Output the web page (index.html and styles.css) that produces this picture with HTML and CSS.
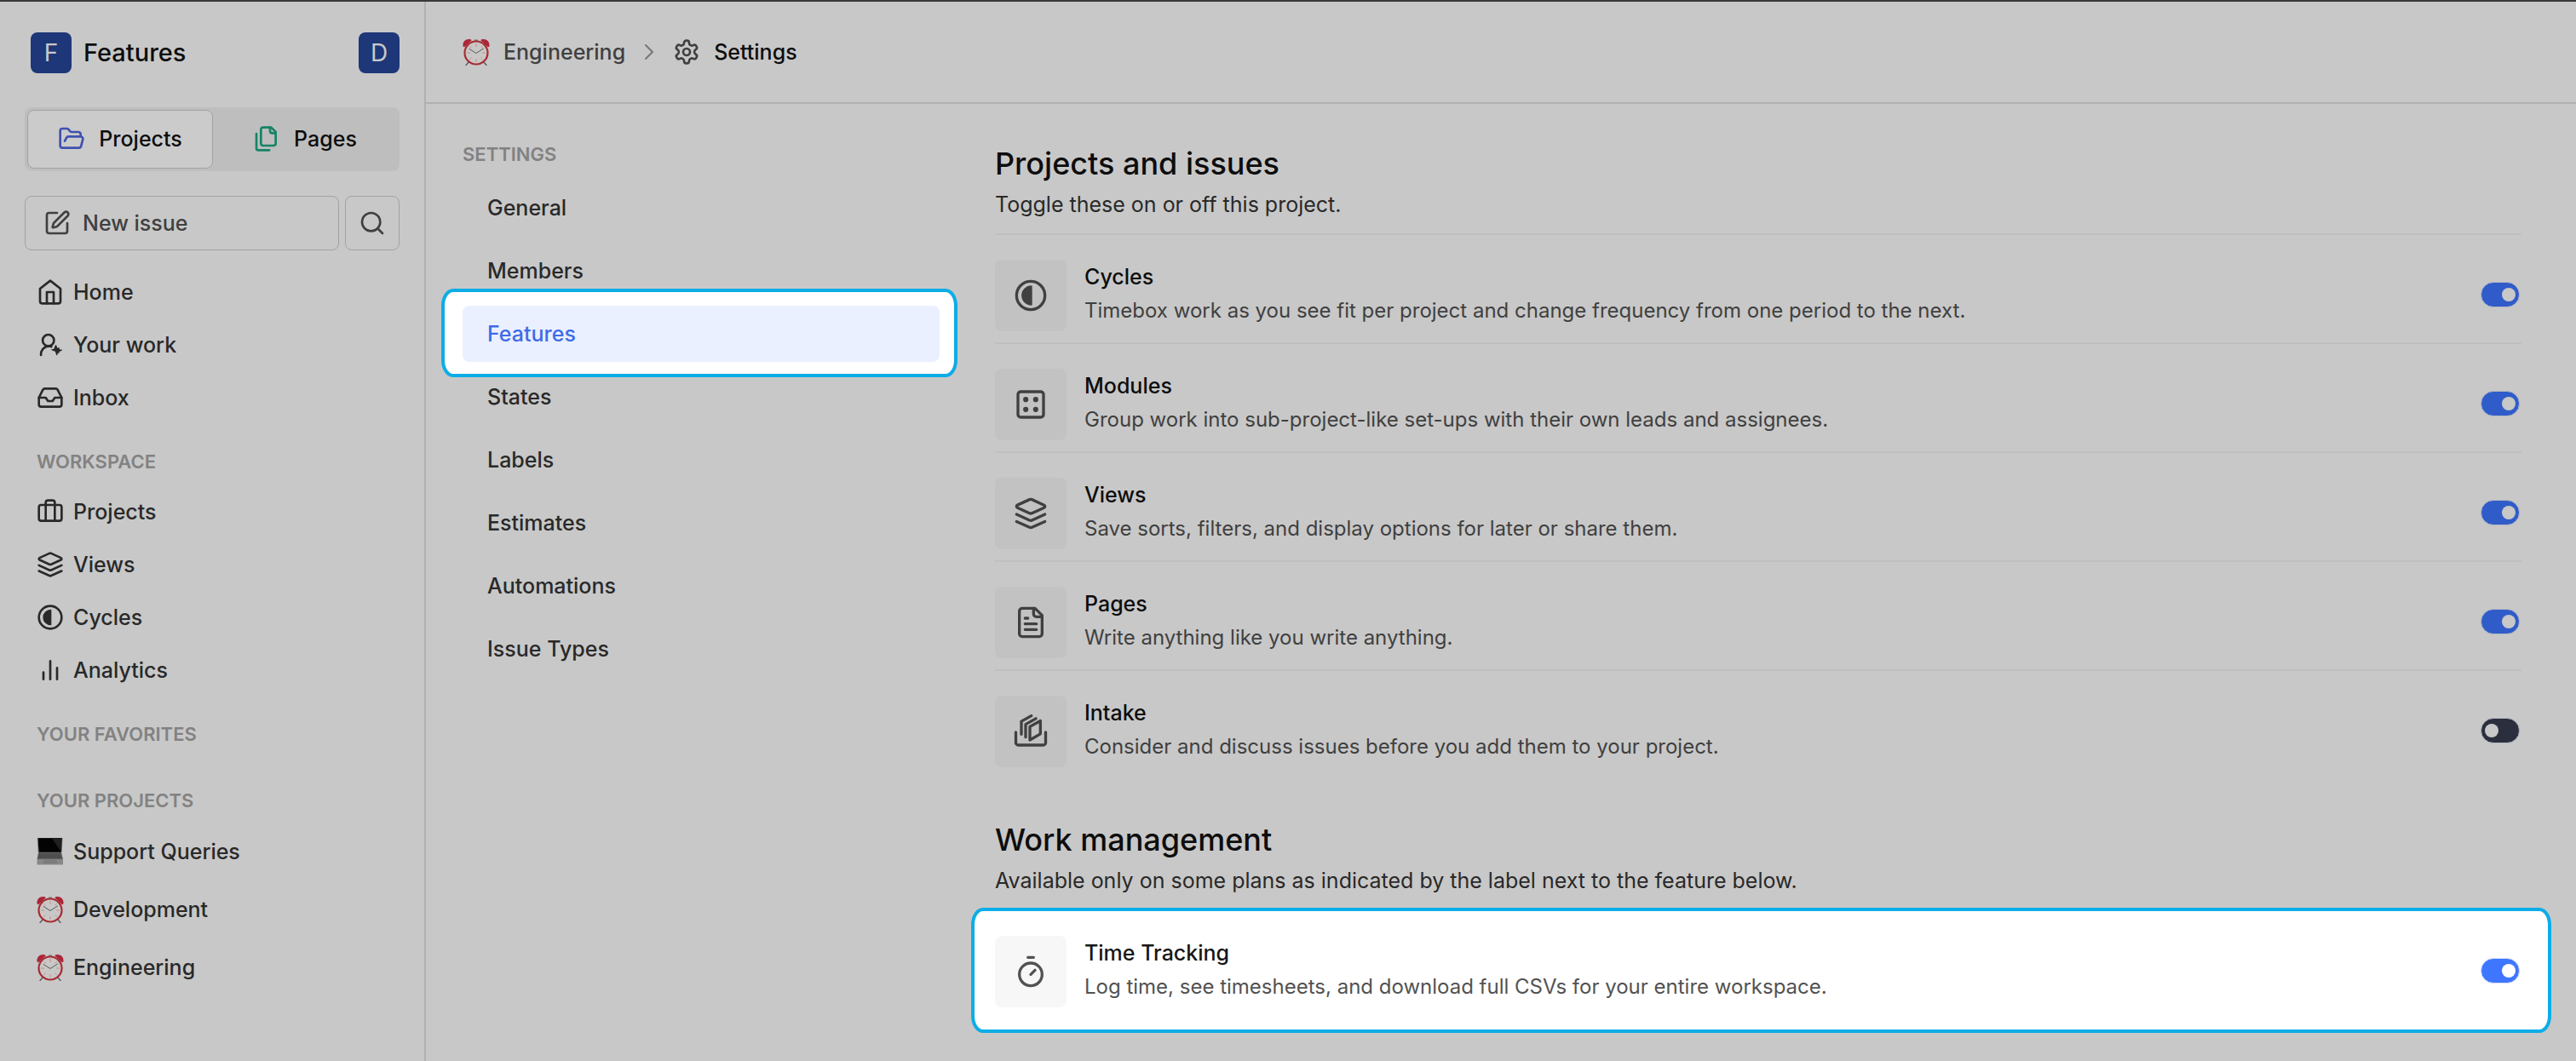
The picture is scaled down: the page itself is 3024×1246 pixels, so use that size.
FILE: index.html
```html
<!DOCTYPE html>
<html lang="en">
<head>
<meta charset="utf-8">
<meta name="viewport" content="width=device-width, initial-scale=1">
<title>Engineering - Settings</title>
<link rel="stylesheet" href="styles.css">
</head>
<body>
<svg class="sprite" aria-hidden="true">
  <symbol id="folder" viewBox="0 0 24 24"><path d="m6 14 1.5-2.9A2 2 0 0 1 9.24 10H20a2 2 0 0 1 1.94 2.5l-1.54 6a2 2 0 0 1-1.95 1.5H4a2 2 0 0 1-2-2V5a2 2 0 0 1 2-2h3.9a2 2 0 0 1 1.69.9l.81 1.2a2 2 0 0 0 1.67.9H18a2 2 0 0 1 2 2v2"/></symbol>
  <symbol id="files" viewBox="0 0 24 24"><path d="M20 7h-3a2 2 0 0 1-2-2V2"/><path d="M9 18a2 2 0 0 1-2-2V4a2 2 0 0 1 2-2h7l4 4v10a2 2 0 0 1-2 2Z"/><path d="M3 7.600v12.800A1.600 1.600 0 0 0 4.600 22h9.800"/></symbol>
  <symbol id="compose" viewBox="0 0 24 24"><path d="M12 3H5a2 2 0 0 0-2 2v14a2 2 0 0 0 2 2h14a2 2 0 0 0 2-2v-7"/><path d="M18.375 2.625a1 1 0 0 1 3 3l-9.013 9.014a2 2 0 0 1-.853.505l-2.873.84a.5.5 0 0 1-.62-.62l.84-2.873a2 2 0 0 1 .506-.852z"/></symbol>
  <symbol id="search" viewBox="0 0 24 24"><circle cx="11" cy="11" r="8"/><path d="m21 21-4.300-4.300"/></symbol>
  <symbol id="home" viewBox="0 0 24 24"><path d="m3 9 9-7 9 7v11a2 2 0 0 1-2 2H5a2 2 0 0 1-2-2z"/><path d="M9 22V12h6v10"/></symbol>
  <symbol id="user" viewBox="0 0 24 24"><circle cx="10.300" cy="8" r="5"/><path d="M3.800 21a7.500 7.500 0 0 1 6.500-8c1 0 1.800.1 2.700.5"/><path d="M13.500 16.300h1.900l1.500-3.800 1.300 3.200 1.300-.900.400 1.700 2.100.100-2.300 1-.3 1.200-1.100-.200-.500 2.100-1-3.200z" fill="currentColor" stroke-width="1"/></symbol>
  <symbol id="inbox" viewBox="0 0 24 24"><path d="M22 12h-6l-2 3h-4l-2-3H2"/><path d="M5.450 5.110 2 12v6a2 2 0 0 0 2 2h16a2 2 0 0 0 2-2v-6l-3.450-6.890A2 2 0 0 0 16.760 4H7.240a2 2 0 0 0-1.790 1.110z"/></symbol>
  <symbol id="briefcase" viewBox="0 0 24 24"><rect width="20" height="14" x="2" y="6" rx="2"/><path d="M16 20V4a2 2 0 0 0-2-2h-4a2 2 0 0 0-2 2v16"/></symbol>
  <symbol id="layers" viewBox="0 0 24 24"><path d="m12.830 2.180a2 2 0 0 0-1.660 0L2.600 6.080a1 1 0 0 0 0 1.830l8.580 3.910a2 2 0 0 0 1.660 0l8.580-3.900a1 1 0 0 0 0-1.830Z"/><path d="m22 17.650-9.170 4.160a2 2 0 0 1-1.660 0L2 17.650"/><path d="m22 12.650-9.170 4.160a2 2 0 0 1-1.660 0L2 12.650"/></symbol>
  <symbol id="contrast" viewBox="0 0 24 24"><circle cx="12" cy="12" r="10"/><path d="M12.500 5.500a6.500 6.500 0 0 0 0 13z" fill="currentColor" stroke-width="1"/></symbol>
  <symbol id="chart" viewBox="0 0 24 24"><path d="M18 20V10M12 20V4M6 20v-6"/></symbol>
  <symbol id="gear" viewBox="0 0 24 24"><path d="M12.220 2h-.44a2 2 0 0 0-2 2v.18a2 2 0 0 1-1 1.730l-.43.25a2 2 0 0 1-2 0l-.15-.08a2 2 0 0 0-2.730.73l-.22.38a2 2 0 0 0 .73 2.730l.15.1a2 2 0 0 1 1 1.720v.51a2 2 0 0 1-1 1.740l-.15.09a2 2 0 0 0-.73 2.730l.22.38a2 2 0 0 0 2.730.73l.15-.08a2 2 0 0 1 2 0l.43.25a2 2 0 0 1 1 1.730V20a2 2 0 0 0 2 2h.44a2 2 0 0 0 2-2v-.18a2 2 0 0 1 1-1.730l.43-.25a2 2 0 0 1 2 0l.15.08a2 2 0 0 0 2.730-.73l.22-.39a2 2 0 0 0-.73-2.730l-.15-.08a2 2 0 0 1-1-1.740v-.5a2 2 0 0 1 1-1.740l.15-.09a2 2 0 0 0 .73-2.730l-.22-.38a2 2 0 0 0-2.730-.73l-.15.08a2 2 0 0 1-2 0l-.43-.25a2 2 0 0 1-1-1.730V4a2 2 0 0 0-2-2z"/><circle cx="12" cy="12" r="3"/></symbol>
  <symbol id="chevron" viewBox="0 0 24 24"><path d="m8 4 8 8-8 8"/></symbol>
  <symbol id="dice" viewBox="0 0 24 24"><rect width="18" height="18" x="3" y="3" rx="2"/><g fill="currentColor" stroke-width="1.500"><circle cx="8.500" cy="8.500" r="1.100"/><circle cx="15.500" cy="8.500" r="1.100"/><circle cx="8.500" cy="15.500" r="1.100"/><circle cx="15.500" cy="15.500" r="1.100"/></g></symbol>
  <symbol id="page" viewBox="0 0 24 24"><path d="M15 2H6a2 2 0 0 0-2 2v16a2 2 0 0 0 2 2h12a2 2 0 0 0 2-2V7Z"/><path d="M14 2v4a2 2 0 0 0 2 2h4M10 9H8M16 13H8M16 17H8"/></symbol>
  <symbol id="intake" viewBox="0 0 24 24"><path d="M1.500 12.500v7.400a1.700 1.700 0 0 0 1.700 1.700h17.600a1.700 1.700 0 0 0 1.700-1.700v-7.400"/><path d="m11.400 8.600 7.400-4.100v9.200L11.400 18z"/><path d="M8.400 16V7l7.200-4.100M5.400 14V4.900L12.400 1"/></symbol>
  <symbol id="timer" viewBox="0 0 24 24"><path d="M10 2h4M12 14l3-3"/><circle cx="12" cy="14" r="8"/></symbol>
  <symbol id="clock" viewBox="0 0 32 32">
    <path d="M8 27 4 31.500M24 27l4 4.500" stroke="#5c5f60" stroke-width="1.500"/>
    <path d="M0.500 9C0 3 5 0 10 1.500c1 .5.500 1.500-.5 2L3 9.500C2 10.500.8 10.300.5 9zM31.500 9C32 3 27 0 22 1.500c-1 .5-.5 1.500.5 2L29 9.500c1 1 2.200.8 2.500-.5z" fill="#aa2638" stroke="none"/>
    <path d="M14 1.500h4v2h-4z" fill="#77797a" stroke="none"/>
    <circle cx="16" cy="17" r="13.500" fill="#c9c8c6" stroke="#a72c33" stroke-width="2.200"/>
    <path d="M16 6.500v3M16 24.500v3M5.500 17h3M23.500 17h3M8.600 9.600l1.500 1.500M23.400 24.400l-1.500-1.500M8.600 24.400l1.500-1.500M23.400 9.600l-1.500 1.500" stroke="#c58c8a" stroke-width="1"/>
    <path d="m8 12.500 8 5 8.500-5.500" fill="none" stroke="#555b5c" stroke-width="1"/>
  </symbol>
  <symbol id="laptop" viewBox="0 0 32 32">
    <path d="M1.500 0h28.500l-1 17H2.500z" fill="#030303" stroke="#555" stroke-width=".6"/>
    <path d="M18 .5h11.500l-.9 15.800z" fill="#202020" stroke="none"/>
    <path d="M2 17h27l2 8H.5z" fill="#626262" stroke="none"/>
    <path d="M3 19h25.500M2.500 21h26.500M2 23h27.500" stroke="#2b2b2b" stroke-width="1" stroke-dasharray="1.500 .7" stroke-linecap="butt"/>
    <path d="M.5 25h30.500v6.500H.5z" fill="#888" stroke="none"/>
    <path d="M8 25.500h15.500l.5 4.500H7.500z" fill="#7b7b7b" stroke="none"/>
  </symbol>
</svg>

<div class="app">
  <aside class="sidebar">
    <div class="workspace">
      <span class="avatar">F</span>
      <span class="workspace-name">Features</span>
      <button class="avatar" type="button" aria-label="Account">D</button>
    </div>
    <div class="tabs">
      <button class="tab tab-active" type="button"><svg class="icon icon-folder"><use href="#folder"/></svg>Projects</button>
      <button class="tab" type="button"><svg class="icon icon-files"><use href="#files"/></svg>Pages</button>
    </div>
    <div class="actions">
      <button class="new-issue" type="button"><svg class="icon"><use href="#compose"/></svg>New issue</button>
      <button class="search" type="button" aria-label="Search"><svg class="icon"><use href="#search"/></svg></button>
    </div>
    <nav class="side-nav">
      <a class="side-link" href="#"><svg class="icon"><use href="#home"/></svg>Home</a>
      <a class="side-link" href="#"><svg class="icon"><use href="#user"/></svg>Your work</a>
      <a class="side-link" href="#"><svg class="icon"><use href="#inbox"/></svg>Inbox</a>
      <h2 class="label side-label">WORKSPACE</h2>
      <a class="side-link" href="#"><svg class="icon"><use href="#briefcase"/></svg>Projects</a>
      <a class="side-link" href="#"><svg class="icon"><use href="#layers"/></svg>Views</a>
      <a class="side-link" href="#"><svg class="icon"><use href="#contrast"/></svg>Cycles</a>
      <a class="side-link" href="#"><svg class="icon"><use href="#chart"/></svg>Analytics</a>
      <h2 class="label side-label">YOUR FAVORITES</h2>
      <h2 class="label side-label side-label-projects">YOUR PROJECTS</h2>
      <a class="side-link side-project" href="#"><svg class="icon"><use href="#laptop"/></svg>Support Queries</a>
      <a class="side-link side-project" href="#"><svg class="icon"><use href="#clock"/></svg>Development</a>
      <a class="side-link side-project" href="#"><svg class="icon"><use href="#clock"/></svg>Engineering</a>
    </nav>
  </aside>

  <div class="page">
    <header class="crumbs">
      <a class="crumb" href="#"><svg class="icon"><use href="#clock"/></svg>Engineering</a>
      <svg class="icon icon-chevron"><use href="#chevron"/></svg>
      <span class="crumb crumb-current"><svg class="icon icon-gear"><use href="#gear"/></svg>Settings</span>
    </header>
    <div class="body">
      <nav class="settings-nav">
        <h2 class="label settings-label">SETTINGS</h2>
        <a class="settings-link" href="#">General</a>
        <a class="settings-link" href="#">Members</a>
        <a class="settings-link settings-link-active spotlight" href="#" aria-current="page">Features</a>
        <a class="settings-link" href="#">States</a>
        <a class="settings-link" href="#">Labels</a>
        <a class="settings-link" href="#">Estimates</a>
        <a class="settings-link" href="#">Automations</a>
        <a class="settings-link" href="#">Issue Types</a>
      </nav>
      <main class="content">
        <section class="group">
          <h1 class="group-title">Projects and issues</h1>
          <p class="group-note">Toggle these on or off this project.</p>
          <div class="feature">
            <span class="tile"><svg class="icon"><use href="#contrast"/></svg></span>
            <label class="feature-text" for="cycles"><span class="feature-name">Cycles</span><span class="feature-note">Timebox work as you see fit per project and change frequency from one period to the next.</span></label>
            <input class="toggle" id="cycles" type="checkbox" role="switch" checked>
          </div>
          <div class="feature">
            <span class="tile"><svg class="icon"><use href="#dice"/></svg></span>
            <label class="feature-text" for="modules"><span class="feature-name">Modules</span><span class="feature-note">Group work into sub-project-like set-ups with their own leads and assignees.</span></label>
            <input class="toggle" id="modules" type="checkbox" role="switch" checked>
          </div>
          <div class="feature">
            <span class="tile"><svg class="icon"><use href="#layers"/></svg></span>
            <label class="feature-text" for="views"><span class="feature-name">Views</span><span class="feature-note">Save sorts, filters, and display options for later or share them.</span></label>
            <input class="toggle" id="views" type="checkbox" role="switch" checked>
          </div>
          <div class="feature">
            <span class="tile"><svg class="icon"><use href="#page"/></svg></span>
            <label class="feature-text" for="pages"><span class="feature-name">Pages</span><span class="feature-note">Write anything like you write anything.</span></label>
            <input class="toggle" id="pages" type="checkbox" role="switch" checked>
          </div>
          <div class="feature">
            <span class="tile"><svg class="icon"><use href="#intake"/></svg></span>
            <label class="feature-text" for="intake-toggle"><span class="feature-name">Intake</span><span class="feature-note">Consider and discuss issues before you add them to your project.</span></label>
            <input class="toggle" id="intake-toggle" type="checkbox" role="switch">
          </div>
        </section>
        <section class="group">
          <h1 class="group-title">Work management</h1>
          <p class="group-note">Available only on some plans as indicated by the label next to the feature below.</p>
          <div class="feature feature-lit spotlight">
            <span class="tile"><svg class="icon"><use href="#timer"/></svg></span>
            <label class="feature-text" for="time"><span class="feature-name">Time Tracking</span><span class="feature-note">Log time, see timesheets, and download full CSVs for your entire workspace.</span></label>
            <input class="toggle" id="time" type="checkbox" role="switch" checked>
          </div>
        </section>
      </main>
    </div>
  </div>
</div>
</body>
</html>
```
FILE: styles.css
```css
:root {
  --bg: #c8c8c8;
  --line: #b1b1b1;
  --line-soft: #bfbfbf;
  --outline: #a2a2a2;
  --text: #0d0d0d;
  --text-nav: #292929;
  --text-soft: #404040;
  --text-label: #828282;
  --spot: #0cade6;
}

* { box-sizing: border-box; }

body {
  margin: 0;
  background: var(--bg);
  color: var(--text);
  font: 400 25px/40px Inter, "Liberation Sans", sans-serif;
}

h1, h2, p { margin: 0; }
a { color: inherit; text-decoration: none; }
button {
  padding: 0;
  border: 0;
  background: none;
  color: inherit;
  font: inherit;
}

.sprite { position: absolute; width: 0; height: 0; }

.icon {
  flex: none;
  width: 32px;
  height: 32px;
  fill: none;
  stroke: currentColor;
  stroke-width: 2;
  stroke-linecap: round;
  stroke-linejoin: round;
}

.app {
  display: flex;
  min-height: 100vh;
  border-top: 2px solid #3a3838;
}

.label {
  color: var(--text-label);
  font-size: 22px;
  font-weight: 600;
  line-height: 40px;
}

/* Sidebar */
.sidebar {
  flex: none;
  width: 500px;
  padding: 36px 29px;
  border-right: 2px solid var(--line);
}

.workspace {
  display: flex;
  align-items: center;
  gap: 14px;
  padding-left: 7px;
}

.avatar {
  width: 48px;
  height: 48px;
  border-radius: 8px;
  background: #1e3778;
  color: #c8c8c8;
  font-size: 28px;
  line-height: 48px;
  text-align: center;
}

.workspace-name { flex: 1; font-size: 29px; font-weight: 500; }

.tabs {
  display: flex;
  height: 75px;
  margin-top: 40px;
  padding: 3px;
  border-radius: 8px;
  background: #bebebe;
}

.tab {
  display: flex;
  flex: 1;
  align-items: center;
  justify-content: center;
  gap: 16px;
  padding-bottom: 2px;
  border-radius: 8px;
  font-weight: 500;
}

.tab-active { border: 1px solid var(--outline); background: #cbcbcb; }
.icon-folder { color: #3f51b0; }
.icon-files { color: #158465; }

.actions { display: flex; gap: 7px; margin-top: 29px; color: var(--text-soft); }

.new-issue, .search {
  display: flex;
  align-items: center;
  height: 64px;
  border: 1px solid var(--outline);
  border-radius: 8px;
  font-weight: 500;
}

.new-issue { flex: 1; gap: 14px; padding-left: 21px; }
.search { width: 64px; justify-content: center; }

.side-nav {
  display: flex;
  flex-direction: column;
  margin-top: 18px;
  padding-left: 14px;
  color: var(--text-nav);
}

.side-link { display: flex; align-items: center; gap: 11px; height: 62px; font-weight: 500; }
.side-project { height: 68px; }
.side-label { margin: 24px 0 8px; }
.side-label-projects { margin: 30px 0 6px; }

/* Page */
.page { flex: 1; min-width: 0; }

.crumbs {
  display: flex;
  align-items: center;
  height: 120px;
  padding-left: 43px;
  border-bottom: 2px solid var(--line);
  font-weight: 500;
}

.crumb { display: flex; align-items: center; gap: 16px; color: var(--text-soft); }
.crumb-current { color: var(--text); }
.icon-chevron { width: 24px; height: 24px; margin: 0 16px; color: #777; }
.icon-gear { color: var(--text-soft); }

.body { display: flex; gap: 65px; padding: 0 64px 0 43px; }

.settings-nav {
  display: flex;
  flex: none;
  flex-direction: column;
  gap: 8px;
  width: 560px;
  padding-top: 39px;
  color: var(--text-nav);
}

.settings-label { margin-bottom: 2px; }

.settings-link {
  height: 66px;
  padding-left: 29px;
  border-radius: 8px;
  font-weight: 500;
  line-height: 66px;
}

.settings-link-active { background: #eaf0ff; color: #3f6be8; }

/* Outlined patch that lifts an element off the dimmed page */
.spotlight { position: relative; z-index: 0; }
.spotlight::before {
  content: "";
  position: absolute;
  z-index: -1;
  border: 4px solid var(--spot);
  border-radius: 14px / 20px;
  background: #fff;
}

.settings-link-active::before { inset: -20px -21px -18px -25px; }
.settings-link-active::after {
  content: "";
  position: absolute;
  z-index: -1;
  inset: 0;
  border-radius: inherit;
  background: inherit;
}

.content { flex: 1; min-width: 0; padding: 48px 0; }
.group + .group { margin-top: 50px; }
.group-title { font-size: 36px; font-weight: 500; line-height: 44px; }
.group-note { padding: 6px 0 14px; color: var(--text-nav); }

.feature {
  display: flex;
  align-items: flex-start;
  gap: 21px;
  height: 128px;
  padding-top: 29px;
  border-top: 2px solid var(--line-soft);
}

.tile {
  display: grid;
  flex: none;
  place-items: center;
  width: 84px;
  height: 84px;
  border-radius: 8px;
  background: #c2c2c2;
  color: var(--text-soft);
}

.tile .icon { width: 40px; height: 40px; }

.feature-text { display: flex; flex: 1; flex-direction: column; }
.feature-name { font-weight: 500; }
.feature-note { color: var(--text-soft); font-size: 24px; }

.toggle {
  width: 46px;
  height: 30px;
  margin: 26px 2px 0 0;
  padding: 6px 4px;
  border: 1px solid #b3b7c2;
  border-radius: 15px;
  background: #2b2f3d;
  appearance: none;
}

.toggle::before {
  content: "";
  display: block;
  width: 16px;
  height: 16px;
  border-radius: 50%;
  background: #c8c8c8;
}

.toggle:checked { background: #305cca; }
.toggle:checked::before { margin-left: auto; }

.feature-lit { border-top-color: transparent; color: #171717; }
.feature-lit::before { inset: -4px -35px -17px -28px; }
.feature-lit .tile { background: #f7f7f7; color: #525252; }
.feature-lit .feature-note { color: #525252; }
.feature-lit .toggle { border-color: #d5dffc; }
.feature-lit .toggle:checked { background: #3f76ff; }
.feature-lit .toggle::before { background: #fff; }
```
